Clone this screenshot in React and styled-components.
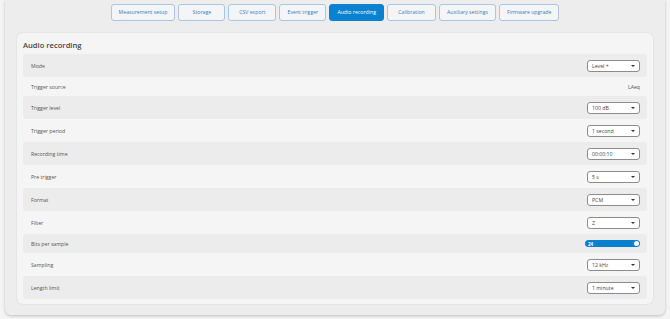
import React from "react";
import styled, { createGlobalStyle } from "styled-components";

const Global = createGlobalStyle`
  html, body { margin: 0; padding: 0; background: #f4f4f4; }
  body { font-family: "Open Sans", "Noto Sans", sans-serif; }
`;

const Page = styled.div`
  width: 670px;
  height: 319px;
  padding: 0 5px;
  box-sizing: border-box;
`;

const Frame = styled.div`
  background: #ededed;
  height: 315px;
  box-sizing: border-box;
  border-radius: 0 0 6px 6px;
  box-shadow: 0 1px 3px rgba(0, 0, 0, 0.22);
  padding: 4px 12px 0;
  display: flex;
  flex-direction: column;
  gap: 12px;
`;

const Tabs = styled.div`
  display: flex;
  justify-content: center;
  gap: 3px;
`;

const Tab = styled.button`
  height: 17px;
  min-width: ${(p) => p.$w || 47}px;
  padding: 0 7px;
  box-sizing: border-box;
  border-radius: 3px;
  border: 1px solid ${(p) => (p.$active ? "#0a82cf" : "#a9c6e2")};
  background: ${(p) => (p.$active ? "#0a82cf" : "#f3f5f8")};
  color: ${(p) => (p.$active ? "#ffffff" : "#3a7cbd")};
  font-family: "Open Sans", sans-serif;
  font-size: 5.2px;
  line-height: 1;
  cursor: pointer;
`;

const Card = styled.div`
  background: #f5f5f5;
  border-radius: 6px;
  box-shadow: 0 0 2px rgba(0, 0, 0, 0.12);
  padding: 5px 6px 5px;
  display: flex;
  flex-direction: column;
`;

const Title = styled.h2`
  margin: 0;
  font-size: 7.6px;
  font-weight: 600;
  color: #454545;
  height: 16px;
  line-height: 15px;
`;

const Row = styled.div`
  display: flex;
  align-items: center;
  justify-content: space-between;
  height: ${(p) => (p.$short ? 19 : 23)}px;
  padding: 0 7px 0 8px;
  border-radius: 3px;
  background: ${(p) => (p.$shaded ? "#ececec" : "transparent")};
`;

const Label = styled.span`
  font-size: 5.2px;
  color: #555;
`;

const Value = styled.span`
  font-size: 5.2px;
  color: #555;
`;

const Select = styled.div`
  width: 53px;
  height: 12px;
  box-sizing: border-box;
  border: 1px solid #8c8c8c;
  border-radius: 3px;
  background: #fff;
  display: flex;
  align-items: center;
  justify-content: space-between;
  padding: 0 4px;
  font-size: 5.2px;
  color: #444;
`;

const Caret = styled.span`
  width: 0;
  height: 0;
  border-left: 2px solid transparent;
  border-right: 2px solid transparent;
  border-top: 2.5px solid #333;
`;

const Toggle = styled.div`
  position: relative;
  width: 55px;
  height: 7px;
  border-radius: 4px;
  background: #0a7fcd;
  display: flex;
  align-items: center;
  padding-left: 3px;
  box-sizing: border-box;
  font-size: 4.5px;
  font-weight: 700;
  color: #fff;
`;

const Knob = styled.span`
  position: absolute;
  right: 1px;
  top: 1px;
  width: 5px;
  height: 5px;
  border-radius: 50%;
  background: #fff;
`;

const tabs = [
  { label: "Measurement setup" },
  { label: "Storage" },
  { label: "CSV export", w: 48 },
  { label: "Event trigger" },
  { label: "Audio recording", active: true },
  { label: "Calibration", w: 49 },
  { label: "Auxiliary settings" },
  { label: "Firmware upgrade" },
];

const rows = [
  { label: "Mode", select: "Level +" },
  { label: "Trigger source", text: "LAeq" },
  { label: "Trigger level", select: "100 dB" },
  { label: "Trigger period", select: "1 second" },
  { label: "Recording time", select: "00:00:10" },
  { label: "Pre trigger", select: "5 s" },
  { label: "Format", select: "PCM" },
  { label: "Filter", select: "Z" },
  { label: "Bits per sample", toggle: "24" },
  { label: "Sampling", select: "12 kHz" },
  { label: "Length limit", select: "1 minute" },
];

export default function App() {
  return (
    <Page>
      <Global />
      <Frame>
        <Tabs>
          {tabs.map((t) => (
            <Tab key={t.label} $active={t.active} $w={t.w}>
              {t.label}
            </Tab>
          ))}
        </Tabs>
        <Card>
          <Title>Audio recording</Title>
          {rows.map((r, i) => (
            <Row key={r.label} $shaded={i % 2 === 0} $short={!r.select}>
              <Label>{r.label}</Label>
              {r.select && (
                <Select>
                  <span>{r.select}</span>
                  <Caret />
                </Select>
              )}
              {r.text && <Value>{r.text}</Value>}
              {r.toggle && (
                <Toggle>
                  {r.toggle}
                  <Knob />
                </Toggle>
              )}
            </Row>
          ))}
        </Card>
      </Frame>
    </Page>
  );
}
